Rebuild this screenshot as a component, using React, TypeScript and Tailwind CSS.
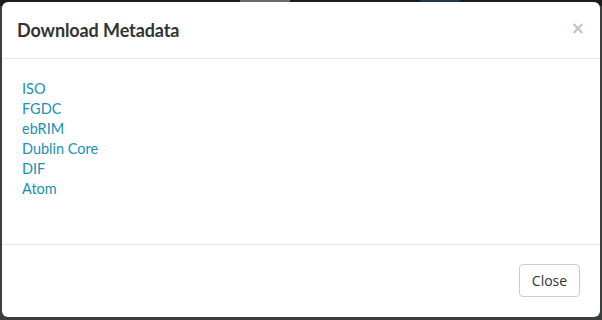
import React from "react";

const links = ["ISO", "FGDC", "ebRIM", "Dublin Core", "DIF", "Atom"];

export default function App() {
  return (
    <div className="relative w-[602px] h-[320px] overflow-hidden bg-[#3b3f42]" style={{ fontFamily: "Lato, 'Open Sans', sans-serif" }}>
      <div className="absolute left-0 top-0 w-full h-[6px] bg-[#1c1c1c]" />
      <div className="absolute left-[240px] top-0 w-[50px] h-[2px] bg-[#6b6b6b]" />
      <div className="absolute left-[420px] top-0 w-[40px] h-[3px] bg-[#24384a]" />
      <div className="absolute left-[2px] top-[2px] w-[598px] h-[315px] bg-white rounded-[6px] flex flex-col">
        <div className="flex items-start justify-between px-[15px] pt-[15px] pb-[15px] border-b border-[#e5e5e5] h-[57px]">
          <h4 className="text-[18px] leading-[26px] font-bold text-[#333333] tracking-[-0.1px]">Download Metadata</h4>
          <span className="leading-[21px] font-bold text-[#c4c4c4] mt-[1px]" style={{ fontFamily: "'DejaVu Sans', sans-serif", fontSize: "17px" }}>×</span>
        </div>
        <div className="flex flex-col pl-[20px] pt-[20px] h-[186px] border-b border-[#e5e5e5]">
          {links.map((l) => (
            <a key={l} href="#" className="text-[14.5px] leading-[20px] text-[#2191b4] w-fit">{l}</a>
          ))}
        </div>
        <div className="flex flex-1 justify-end items-start pt-[19px] pr-[20px]">
          <button className="w-[61px] h-[33px] border border-[#cccccc] rounded-[4px] text-[14px] text-[#333333] bg-white" style={{ fontFamily: "'Open Sans', sans-serif" }}>Close</button>
        </div>
      </div>
    </div>
  );
}
